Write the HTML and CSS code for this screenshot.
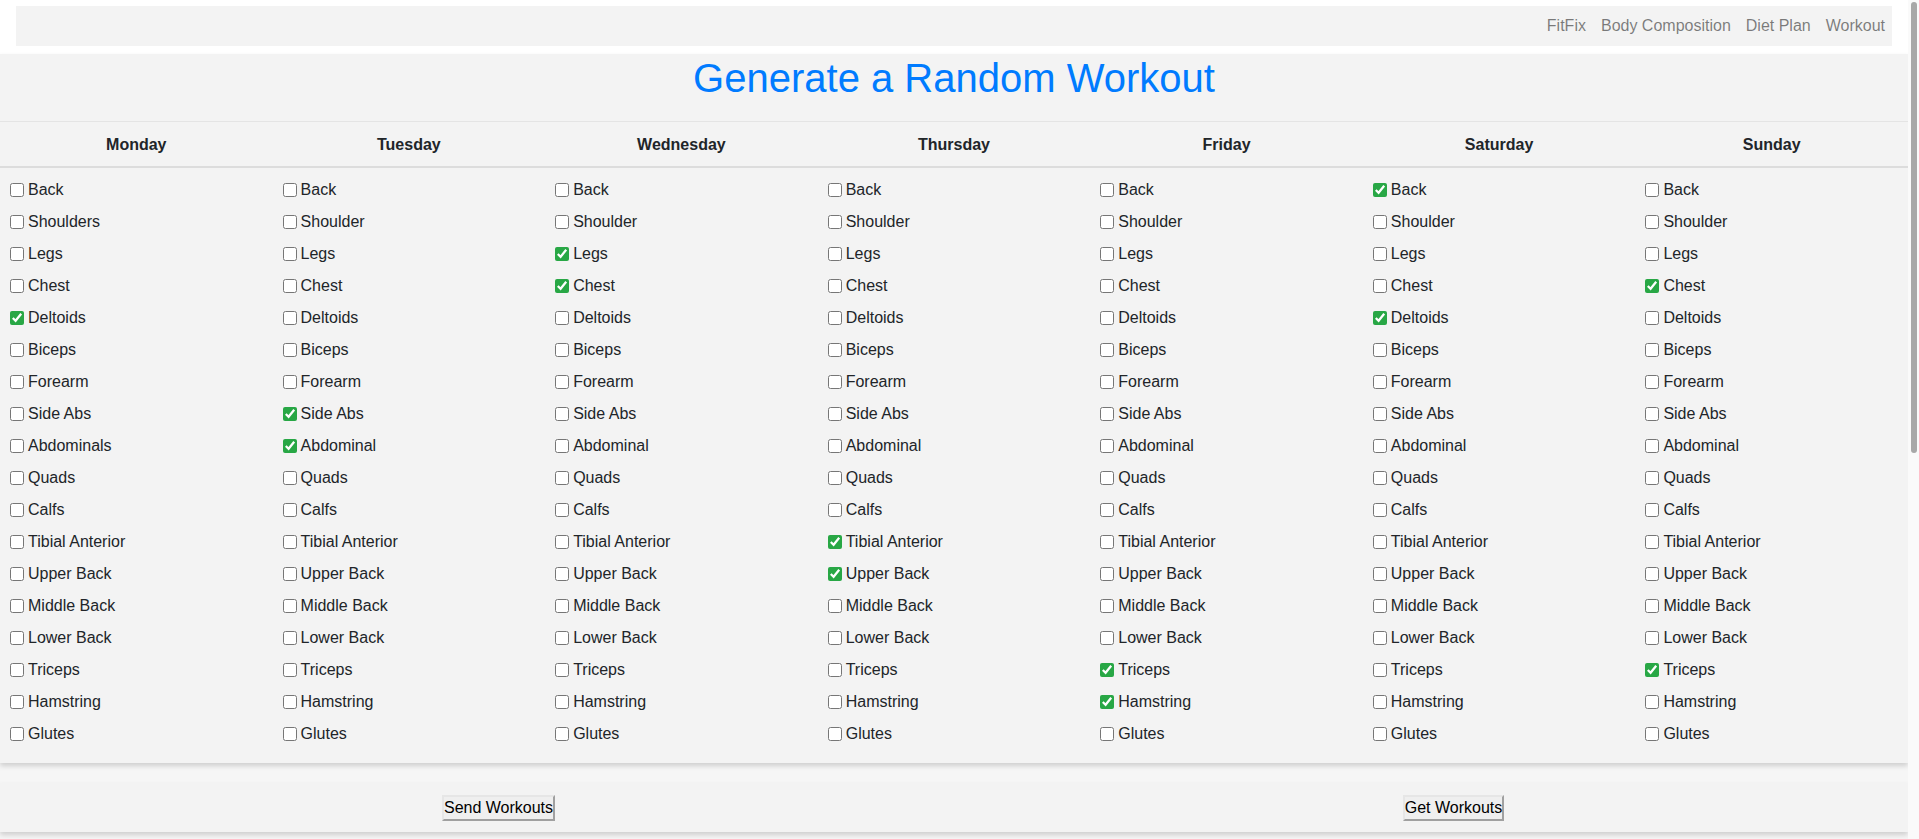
FILE: index.html
```html
<!DOCTYPE html>
<html lang="en">
<head>
<meta charset="utf-8">
<title>FitFix - Workout</title>
<link rel="stylesheet" href="styles.css">
</head>
<body>
<nav class="navbar">
  <ul class="nav-links">
    <li><a href="#">FitFix</a></li>
    <li><a href="#">Body Composition</a></li>
    <li><a href="#">Diet Plan</a></li>
    <li><a href="#">Workout</a></li>
  </ul>
</nav>
<div class="page">
  <main class="card workout-card">
    <h1 class="title">Generate a Random Workout</h1>
    <table class="week">
      <thead>
        <tr><th>Monday</th><th>Tuesday</th><th>Wednesday</th><th>Thursday</th><th>Friday</th><th>Saturday</th><th>Sunday</th></tr>
      </thead>
      <tbody>
        <tr>
          <td>
            <label class="item"><input type="checkbox">Back</label>
            <label class="item"><input type="checkbox">Shoulders</label>
            <label class="item"><input type="checkbox">Legs</label>
            <label class="item"><input type="checkbox">Chest</label>
            <label class="item"><input type="checkbox" checked>Deltoids</label>
            <label class="item"><input type="checkbox">Biceps</label>
            <label class="item"><input type="checkbox">Forearm</label>
            <label class="item"><input type="checkbox">Side Abs</label>
            <label class="item"><input type="checkbox">Abdominals</label>
            <label class="item"><input type="checkbox">Quads</label>
            <label class="item"><input type="checkbox">Calfs</label>
            <label class="item"><input type="checkbox">Tibial Anterior</label>
            <label class="item"><input type="checkbox">Upper Back</label>
            <label class="item"><input type="checkbox">Middle Back</label>
            <label class="item"><input type="checkbox">Lower Back</label>
            <label class="item"><input type="checkbox">Triceps</label>
            <label class="item"><input type="checkbox">Hamstring</label>
            <label class="item"><input type="checkbox">Glutes</label>
          </td>
          <td>
            <label class="item"><input type="checkbox">Back</label>
            <label class="item"><input type="checkbox">Shoulder</label>
            <label class="item"><input type="checkbox">Legs</label>
            <label class="item"><input type="checkbox">Chest</label>
            <label class="item"><input type="checkbox">Deltoids</label>
            <label class="item"><input type="checkbox">Biceps</label>
            <label class="item"><input type="checkbox">Forearm</label>
            <label class="item"><input type="checkbox" checked>Side Abs</label>
            <label class="item"><input type="checkbox" checked>Abdominal</label>
            <label class="item"><input type="checkbox">Quads</label>
            <label class="item"><input type="checkbox">Calfs</label>
            <label class="item"><input type="checkbox">Tibial Anterior</label>
            <label class="item"><input type="checkbox">Upper Back</label>
            <label class="item"><input type="checkbox">Middle Back</label>
            <label class="item"><input type="checkbox">Lower Back</label>
            <label class="item"><input type="checkbox">Triceps</label>
            <label class="item"><input type="checkbox">Hamstring</label>
            <label class="item"><input type="checkbox">Glutes</label>
          </td>
          <td>
            <label class="item"><input type="checkbox">Back</label>
            <label class="item"><input type="checkbox">Shoulder</label>
            <label class="item"><input type="checkbox" checked>Legs</label>
            <label class="item"><input type="checkbox" checked>Chest</label>
            <label class="item"><input type="checkbox">Deltoids</label>
            <label class="item"><input type="checkbox">Biceps</label>
            <label class="item"><input type="checkbox">Forearm</label>
            <label class="item"><input type="checkbox">Side Abs</label>
            <label class="item"><input type="checkbox">Abdominal</label>
            <label class="item"><input type="checkbox">Quads</label>
            <label class="item"><input type="checkbox">Calfs</label>
            <label class="item"><input type="checkbox">Tibial Anterior</label>
            <label class="item"><input type="checkbox">Upper Back</label>
            <label class="item"><input type="checkbox">Middle Back</label>
            <label class="item"><input type="checkbox">Lower Back</label>
            <label class="item"><input type="checkbox">Triceps</label>
            <label class="item"><input type="checkbox">Hamstring</label>
            <label class="item"><input type="checkbox">Glutes</label>
          </td>
          <td>
            <label class="item"><input type="checkbox">Back</label>
            <label class="item"><input type="checkbox">Shoulder</label>
            <label class="item"><input type="checkbox">Legs</label>
            <label class="item"><input type="checkbox">Chest</label>
            <label class="item"><input type="checkbox">Deltoids</label>
            <label class="item"><input type="checkbox">Biceps</label>
            <label class="item"><input type="checkbox">Forearm</label>
            <label class="item"><input type="checkbox">Side Abs</label>
            <label class="item"><input type="checkbox">Abdominal</label>
            <label class="item"><input type="checkbox">Quads</label>
            <label class="item"><input type="checkbox">Calfs</label>
            <label class="item"><input type="checkbox" checked>Tibial Anterior</label>
            <label class="item"><input type="checkbox" checked>Upper Back</label>
            <label class="item"><input type="checkbox">Middle Back</label>
            <label class="item"><input type="checkbox">Lower Back</label>
            <label class="item"><input type="checkbox">Triceps</label>
            <label class="item"><input type="checkbox">Hamstring</label>
            <label class="item"><input type="checkbox">Glutes</label>
          </td>
          <td>
            <label class="item"><input type="checkbox">Back</label>
            <label class="item"><input type="checkbox">Shoulder</label>
            <label class="item"><input type="checkbox">Legs</label>
            <label class="item"><input type="checkbox">Chest</label>
            <label class="item"><input type="checkbox">Deltoids</label>
            <label class="item"><input type="checkbox">Biceps</label>
            <label class="item"><input type="checkbox">Forearm</label>
            <label class="item"><input type="checkbox">Side Abs</label>
            <label class="item"><input type="checkbox">Abdominal</label>
            <label class="item"><input type="checkbox">Quads</label>
            <label class="item"><input type="checkbox">Calfs</label>
            <label class="item"><input type="checkbox">Tibial Anterior</label>
            <label class="item"><input type="checkbox">Upper Back</label>
            <label class="item"><input type="checkbox">Middle Back</label>
            <label class="item"><input type="checkbox">Lower Back</label>
            <label class="item"><input type="checkbox" checked>Triceps</label>
            <label class="item"><input type="checkbox" checked>Hamstring</label>
            <label class="item"><input type="checkbox">Glutes</label>
          </td>
          <td>
            <label class="item"><input type="checkbox" checked>Back</label>
            <label class="item"><input type="checkbox">Shoulder</label>
            <label class="item"><input type="checkbox">Legs</label>
            <label class="item"><input type="checkbox">Chest</label>
            <label class="item"><input type="checkbox" checked>Deltoids</label>
            <label class="item"><input type="checkbox">Biceps</label>
            <label class="item"><input type="checkbox">Forearm</label>
            <label class="item"><input type="checkbox">Side Abs</label>
            <label class="item"><input type="checkbox">Abdominal</label>
            <label class="item"><input type="checkbox">Quads</label>
            <label class="item"><input type="checkbox">Calfs</label>
            <label class="item"><input type="checkbox">Tibial Anterior</label>
            <label class="item"><input type="checkbox">Upper Back</label>
            <label class="item"><input type="checkbox">Middle Back</label>
            <label class="item"><input type="checkbox">Lower Back</label>
            <label class="item"><input type="checkbox">Triceps</label>
            <label class="item"><input type="checkbox">Hamstring</label>
            <label class="item"><input type="checkbox">Glutes</label>
          </td>
          <td>
            <label class="item"><input type="checkbox">Back</label>
            <label class="item"><input type="checkbox">Shoulder</label>
            <label class="item"><input type="checkbox">Legs</label>
            <label class="item"><input type="checkbox" checked>Chest</label>
            <label class="item"><input type="checkbox">Deltoids</label>
            <label class="item"><input type="checkbox">Biceps</label>
            <label class="item"><input type="checkbox">Forearm</label>
            <label class="item"><input type="checkbox">Side Abs</label>
            <label class="item"><input type="checkbox">Abdominal</label>
            <label class="item"><input type="checkbox">Quads</label>
            <label class="item"><input type="checkbox">Calfs</label>
            <label class="item"><input type="checkbox">Tibial Anterior</label>
            <label class="item"><input type="checkbox">Upper Back</label>
            <label class="item"><input type="checkbox">Middle Back</label>
            <label class="item"><input type="checkbox">Lower Back</label>
            <label class="item"><input type="checkbox" checked>Triceps</label>
            <label class="item"><input type="checkbox">Hamstring</label>
            <label class="item"><input type="checkbox">Glutes</label>
          </td>
        </tr>
      </tbody>
    </table>
  </main>
  <section class="card actions">
    <div class="action-cell"><button class="btn" type="button">Send Workouts</button></div>
    <div class="action-cell"><button class="btn" type="button">Get Workouts</button></div>
  </section>
  <section class="results"></section>
</div>
<div class="scrollbar" aria-hidden="true"><div class="scroll-thumb"></div></div>
</body>
</html>
```

FILE: styles.css
```css
html, body {
  margin: 0;
  padding: 0;
}

body {
  background: #ffffff;
  font-family: "Liberation Sans", Arial, sans-serif;
  font-size: 16px;
  color: #212529;
  margin-right: 11px;
}

.navbar {
  margin: 6px 16px 0 16px;
  height: 40px;
  background: #f3f3f3;
  display: flex;
  align-items: center;
  justify-content: flex-end;
  padding-right: 7px;
}

.nav-links {
  list-style: none;
  margin: 0;
  padding: 0;
  display: flex;
  gap: 15px;
}

.nav-links a {
  color: rgba(0, 0, 0, 0.5);
  text-decoration: none;
  font-size: 16px;
  line-height: 24px;
}

.page {
  margin-top: 8px;
  background: #f6f6f6;
}

.card {
  background: #f3f3f3;
  box-shadow: 0 3px 5px rgba(0, 0, 0, 0.16);
}

.title {
  margin: 0 0 19px;
  font-size: 40px;
  line-height: 48px;
  font-weight: 400;
  color: #007bff;
  text-align: center;
}

.week {
  width: 100%;
  table-layout: fixed;
  border-collapse: collapse;
}

.week th {
  padding: 11px 12px 9px;
  line-height: 24px;
  font-weight: 700;
  text-align: center;
  border-top: 1px solid #e4e4e4;
  border-bottom: 2px solid #dcdcdc;
}

.week td {
  vertical-align: top;
  padding: 6px 6px 13px;
}

.item {
  display: flex;
  align-items: center;
  height: 32px;
  white-space: nowrap;
}

.item input {
  width: 14px;
  height: 14px;
  margin: 0 4px 0 4px;
  accent-color: #28a745;
}

.actions {
  margin-top: 20px;
  height: 49px;
  display: grid;
  grid-template-columns: 955px 955px;
  padding-left: 21px;
  overflow: hidden;
  align-items: center;
}

.action-cell {
  text-align: center;
}

.btn {
  font-family: "Liberation Sans", Arial, sans-serif;
  font-size: 16px;
  color: #000;
  background: #efefef;
  padding: 2px 0;
  border: 2px solid;
  border-color: #e6e6e6 #a0a0a0 #a0a0a0 #e6e6e6;
  line-height: 18px;
}

.results {
  height: 700px;
}

.scrollbar {
  position: fixed;
  top: 0;
  right: 0;
  width: 11px;
  height: 100vh;
  background: #fafafa;
}

.scroll-thumb {
  margin: 2px 2px 0 3px;
  height: 451px;
  border-radius: 3px;
  background: #a8a8a8;
}
```
